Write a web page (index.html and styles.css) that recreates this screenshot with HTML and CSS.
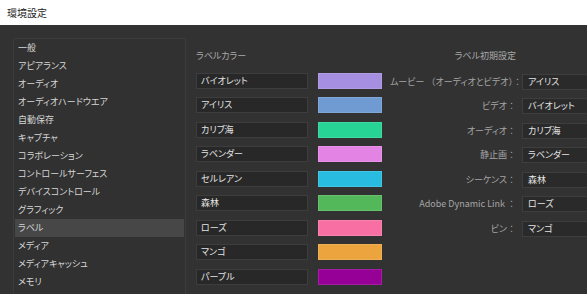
FILE: index.html
```html
<!DOCTYPE html>
<html lang="ja">
<head>
<meta charset="utf-8">
<title>環境設定</title>
<link rel="stylesheet" href="styles.css">
</head>
<body>
<div class="titlebar">環境設定</div>
<div class="main">
  <ul class="nav">
    <li>一般</li>
    <li>アピアランス</li>
    <li>オーディオ</li>
    <li>オーディオハードウエア</li>
    <li>自動保存</li>
    <li>キャプチャ</li>
    <li>コラボレーション</li>
    <li>コントロールサーフェス</li>
    <li>デバイスコントロール</li>
    <li>グラフィック</li>
    <li class="active">ラベル</li>
    <li>メディア</li>
    <li>メディアキャッシュ</li>
    <li>メモリ</li>
  </ul>
  <section class="colors">
    <div class="heading">ラベルカラー</div>
    <div class="color-row"><div class="field">バイオレット</div><div class="swatch" style="background:#a68fe0"></div></div>
    <div class="color-row"><div class="field">アイリス</div><div class="swatch" style="background:#6f9ad2"></div></div>
    <div class="color-row"><div class="field">カリブ海</div><div class="swatch" style="background:#27d496"></div></div>
    <div class="color-row"><div class="field">ラベンダー</div><div class="swatch" style="background:#e383e3"></div></div>
    <div class="color-row"><div class="field">セルレアン</div><div class="swatch" style="background:#28bde0"></div></div>
    <div class="color-row"><div class="field">森林</div><div class="swatch" style="background:#52b85a"></div></div>
    <div class="color-row"><div class="field">ローズ</div><div class="swatch" style="background:#f86fa4"></div></div>
    <div class="color-row"><div class="field">マンゴ</div><div class="swatch" style="background:#eca53e"></div></div>
    <div class="color-row"><div class="field">パープル</div><div class="swatch" style="background:#970096"></div></div>
  </section>
  <section class="defaults">
    <div class="heading right">ラベル初期設定</div>
    <div class="spacer"></div>
    <div class="label">ムービー <span class="fw">（</span>オーディオとビデオ<span class="fw">）</span><span class="fw">：</span></div><div class="select">アイリス</div>
    <div class="label">ビデオ<span class="fw">：</span></div><div class="select">バイオレット</div>
    <div class="label">オーディオ<span class="fw">：</span></div><div class="select">カリブ海</div>
    <div class="label">静止画<span class="fw">：</span></div><div class="select">ラベンダー</div>
    <div class="label">シーケンス<span class="fw">：</span></div><div class="select">森林</div>
    <div class="label">Adobe Dynamic Link <span class="fw">：</span></div><div class="select">ローズ</div>
    <div class="label">ビン<span class="fw">：</span></div><div class="select">マンゴ</div>
  </section>
</div>
</body>
</html>
```

FILE: styles.css
```css
html, body {
  margin: 0;
  padding: 0;
}
body {
  width: 587px;
  height: 294px;
  overflow: hidden;
  background: #323232;
  font-family: "Noto Sans CJK JP", "Noto Sans", sans-serif;
  font-feature-settings: "palt";
  font-size: 9px;
}
.titlebar {
  height: 25px;
  box-sizing: border-box;
  background: #ffffff;
  color: #1e1e1e;
  font-size: 10px;
  line-height: 25px;
  padding-left: 7px;
}
.main {
  display: flex;
  align-items: flex-start;
  padding-top: 13px;
  height: 269px;
  box-sizing: border-box;
  overflow: hidden;
}
.nav {
  flex: none;
  list-style: none;
  margin: 0 0 0 13px;
  padding: 0 1px;
  width: 169px;
  height: 262px;
  border: 1px solid #3c3c3c;
  border-radius: 2px;
  background: #313131;
}
.nav li {
  height: 18px;
  line-height: 18px;
  padding-left: 3px;
  color: #d6d6d6;
}
.nav li.active {
  background: #474747;
}
.colors {
  flex: none;
  margin-left: 10px;
  display: flex;
  flex-direction: column;
  gap: 8.5px;
  padding-top: 10px;
}
.heading {
  color: #a9a9a9;
  height: 16px;
  line-height: 16px;
}
.color-row {
  display: flex;
  gap: 10px;
  height: 16px;
}
.field {
  width: 112px;
  box-sizing: border-box;
  height: 16px;
  line-height: 14px;
  padding-left: 4px;
  border: 1px solid #3d3d3d;
  background: #282828;
  color: #e4e4e4;
}
.swatch {
  width: 64px;
  height: 16px;
  box-sizing: border-box;
  border: 1px solid rgba(255,255,255,0.12);
}
.defaults {
  flex: none;
  margin-left: 8px;
  padding-top: 10px;
  display: grid;
  grid-template-columns: 126px 100px;
  column-gap: 6px;
  row-gap: 8.5px;
  grid-auto-rows: 16px;
}
.defaults .spacer {
  height: 16px;
}
.heading.right {
  text-align: right;
}
.label {
  text-align: right;
  color: #a6a6a6;
  line-height: 16px;
  white-space: nowrap;
  margin-top: 1px;
}
.fw {
  font-feature-settings: normal;
}
.select {
  box-sizing: border-box;
  height: 16px;
  line-height: 14px;
  padding-left: 5px;
  border: 1px solid #3e3e3e;
  background: #2a2a2a;
  color: #e4e4e4;
  margin-top: 1px;
}
```
